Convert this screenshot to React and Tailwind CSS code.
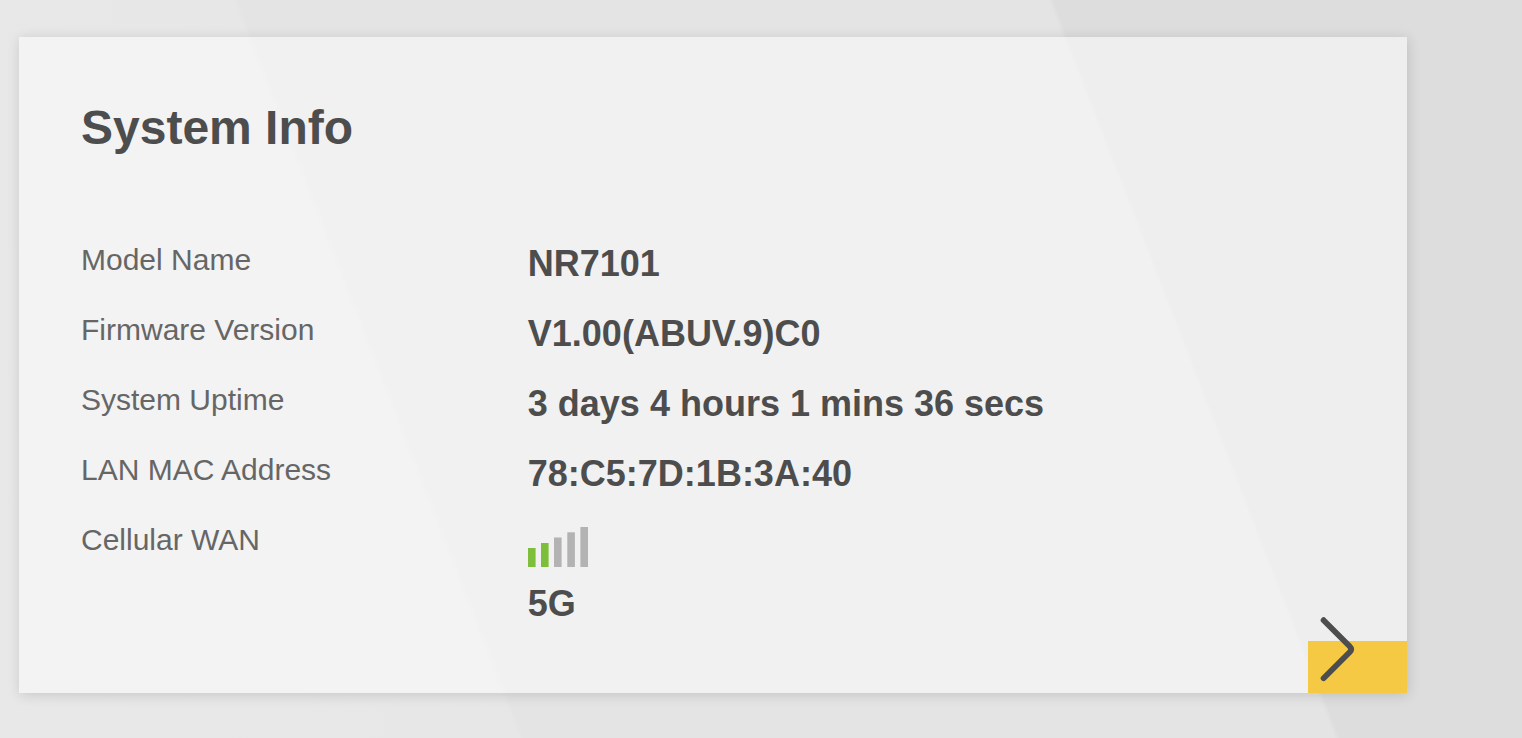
import React from 'react';

const BARS = [
  { x: 0, top: 21, active: true },
  { x: 13, top: 16, active: true },
  { x: 26, top: 10.5, active: false },
  { x: 39.3, top: 5.3, active: false },
  { x: 52.4, top: 0, active: false },
];

const SignalStrength = () => (
  <svg width="60" height="40" viewBox="0 0 60 40" className="block" role="img" aria-label="Signal strength 2 of 5">
    {BARS.map((bar) => (
      <rect
        key={bar.x}
        x={bar.x}
        y={bar.top}
        width="7.6"
        height={40 - bar.top}
        fill={bar.active ? '#7dbe3b' : '#b3b3b3'}
      />
    ))}
  </svg>
);

const InfoRow = ({ label, children }) => (
  <div className="grid grid-cols-[6fr_11fr]">
    <dt className="text-[30px] leading-10 text-[#666666]">{label}</dt>
    <dd className="text-4xl leading-12 font-bold text-[#4d4d4d]">{children}</dd>
  </div>
);

const SystemInfoCard = () => (
  <section className="flex flex-col bg-white/49 shadow-[1px_2px_12px_rgba(0,0,0,0.14)]">
    <div className="pt-[63px] pr-[60px] pl-[62px]">
      <h2 className="text-5xl leading-14 font-bold text-[#4d4d4d]">System Info</h2>

      <dl className="mt-[84px] flex flex-col gap-[22px]">
        <InfoRow label="Model Name">NR7101</InfoRow>
        <InfoRow label="Firmware Version">V1.00(ABUV.9)C0</InfoRow>
        <InfoRow label="System Uptime">3 days 4 hours 1 mins 36 secs</InfoRow>
        <InfoRow label="LAN MAC Address">78:C5:7D:1B:3A:40</InfoRow>
        <InfoRow label="Cellular WAN">
          <div className="flex flex-col gap-[13px] pt-[7px]">
            <SignalStrength />
            <span>5G</span>
          </div>
        </InfoRow>
      </dl>
    </div>

    <button
      type="button"
      aria-label="Open system info"
      className="relative mt-[13px] h-[52px] w-[99px] cursor-pointer self-end bg-[#f6c944]"
    >
      {/* The arrow sticks out above the yellow tab */}
      <svg
        width="40"
        height="72"
        viewBox="0 0 40 72"
        fill="none"
        stroke="#4d4d4d"
        strokeWidth="5.8"
        strokeLinecap="round"
        className="absolute -top-7 left-2"
      >
        <path d="M7.6 7.2 L33.6 33.2 Q36.6 36.2 33.6 39.2 L7.6 65.2" />
      </svg>
    </button>
  </section>
);

const App = () => {
  return (
    <main className="min-h-screen bg-[linear-gradient(68.8deg,#e8e8e8_0%,#e7e7e7_28.7%,#e4e4e4_29%,#e4e4e4_73.8%,#dddddd_74.1%,#dddddd_100%)] pt-[37px] pr-[115px] pb-[45px] pl-[19px] font-['Liberation_Sans',Arial,sans-serif]">
      <SystemInfoCard />
    </main>
  );
};

export default App;
